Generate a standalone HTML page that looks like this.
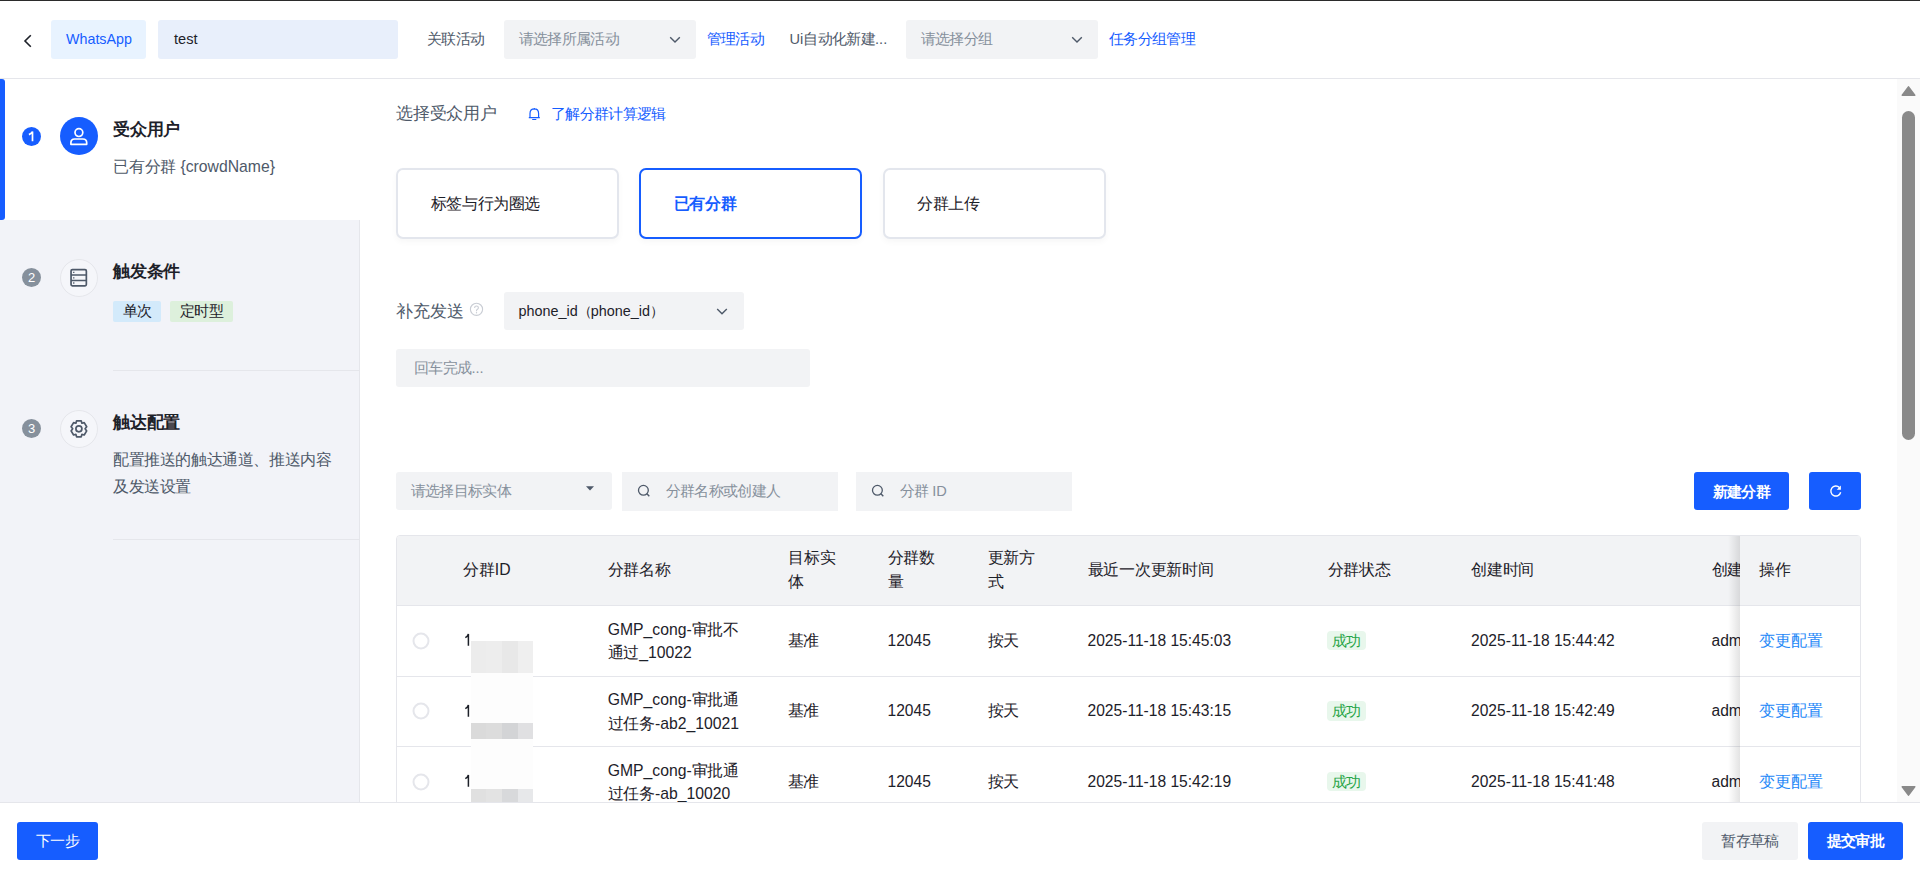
<!DOCTYPE html>
<html><head><meta charset="utf-8">
<style>
*{box-sizing:border-box;margin:0;padding:0}
html,body{width:1920px;height:878px;overflow:hidden;background:#fff;font-family:"Liberation Sans",sans-serif;color:#1d2129}
.a{position:absolute}
.t{position:absolute;white-space:nowrap}
.n{letter-spacing:0}
</style></head><body>

<div class="a" style="left:0px;top:0px;width:1920px;height:1px;background:#2b2b2b"></div>
<div class="a" style="left:0px;top:78px;width:1920px;height:1px;background:#e5e6eb"></div>
<svg class="a" style="left:20px;top:32px" width="16" height="18" viewBox="0 0 16 18"><path d="M10.8 3.2 L5 9 L10.8 14.8" fill="none" stroke="#1d2129" stroke-width="1.6"/></svg>
<div class="a" style="left:51px;top:20px;width:95px;height:39px;background:#e8f3ff;border-radius:3px"></div>
<div class="t" style="left:66px;top:29.00px;line-height:20px;font-size:14.3px;color:#165dff">WhatsApp</div>
<div class="a" style="left:158px;top:20px;width:240px;height:39px;background:#e8effb;border-radius:3px"></div>
<div class="t" style="left:174px;top:29.00px;line-height:20px;font-size:14.6px;color:#1d2129">test</div>
<div class="t" style="left:427px;top:29.00px;line-height:20px;font-size:14.6px;letter-spacing:-0.65px;color:#4e5969">关联活动</div>
<div class="a" style="left:504px;top:20px;width:192px;height:39px;background:#f2f3f5;border-radius:3px"></div>
<div class="t" style="left:518.5px;top:29.00px;line-height:20px;font-size:14.6px;letter-spacing:-0.65px;color:#86909c">请选择所属活动</div>
<svg class="a" style="left:668px;top:35px" width="14" height="10" viewBox="0 0 14 10"><path d="M2.2 2.2 L7 7 L11.8 2.2" fill="none" stroke="#4e5969" stroke-width="1.4"/></svg>
<div class="t" style="left:706.5px;top:29.00px;line-height:20px;font-size:14.6px;letter-spacing:-0.65px;color:#165dff">管理活动</div>
<div class="t" style="left:789.5px;top:29.00px;line-height:20px;font-size:14.6px;letter-spacing:-0.65px;color:#4e5969"><span class="n">Ui</span>自动化新建<span class="n">...</span></div>
<div class="a" style="left:906px;top:20px;width:192px;height:39px;background:#f2f3f5;border-radius:3px"></div>
<div class="t" style="left:920.5px;top:29.00px;line-height:20px;font-size:14.6px;letter-spacing:-0.65px;color:#86909c">请选择分组</div>
<svg class="a" style="left:1070px;top:35px" width="14" height="10" viewBox="0 0 14 10"><path d="M2.2 2.2 L7 7 L11.8 2.2" fill="none" stroke="#4e5969" stroke-width="1.4"/></svg>
<div class="t" style="left:1109px;top:29.00px;line-height:20px;font-size:14.6px;letter-spacing:-0.65px;color:#165dff">任务分组管理</div>
<div class="a" style="left:0px;top:79px;width:359px;height:723px;background:#f2f3f8"></div>
<div class="a" style="left:359px;top:79px;width:1px;height:723px;background:#e5e6eb"></div>
<div class="a" style="left:0px;top:79px;width:360px;height:141px;background:#fff"></div>
<div class="a" style="left:0px;top:79px;width:5px;height:141px;background:#165dff;border-radius:0 3px 3px 0"></div>
<svg class="a" style="left:22px;top:126.5px" width="19" height="19" viewBox="0 0 19 19"><circle cx="9.5" cy="9.5" r="9.5" fill="#165dff"/><path d="M6.9 7.6 Q9.4 6.6 10.5 4.6 V14.3" fill="none" stroke="#fff" stroke-width="1.7"/></svg>
<svg class="a" style="left:60px;top:117px" width="38" height="38" viewBox="0 0 38 38"><circle cx="19" cy="19" r="19" fill="#165dff"/><circle cx="18.9" cy="15.6" r="3.9" fill="none" stroke="#fff" stroke-width="1.7"/><path d="M10.9 27.3 V25.8 Q10.9 22 14.7 22 H22.9 Q26.7 22 26.7 25.8 V27.3 Z" fill="none" stroke="#fff" stroke-width="1.7" stroke-linejoin="round"/></svg>
<div class="t" style="left:113px;top:118.10px;line-height:24px;font-size:16.8px;letter-spacing:-0.2px;font-weight:bold;color:#1d2129">受众用户</div>
<div class="t" style="left:113px;top:155.70px;line-height:22px;font-size:15.75px;letter-spacing:-0.25px;color:#4e5969">已有分群<span class="n"> {crowdName}</span></div>
<div class="a" style="left:22px;top:267.8px;width:19px;height:19px;border-radius:50%;background:#86909c;color:#fff;font-size:13px;line-height:19px;text-align:center">2</div>
<svg class="a" style="left:60px;top:259px" width="38" height="38" viewBox="0 0 38 38"><circle cx="19" cy="19" r="18.5" fill="#f5f6fa" stroke="#e5e6eb" stroke-width="1"/><rect x="11.05" y="10.6" width="15.3" height="16.3" rx="1.3" fill="none" stroke="#4e5969" stroke-width="1.7"/><path d="M11 16.1 H26.4 M11 21.4 H26.4" stroke="#4e5969" stroke-width="1.5"/><path d="M13.1 13.4 h1.3 M13.1 18.8 h1.3 M13.1 24 h1.3" stroke="#4e5969" stroke-width="1.3"/></svg>
<div class="t" style="left:113px;top:259.70px;line-height:24px;font-size:16.8px;letter-spacing:-0.2px;font-weight:bold;color:#1d2129">触发条件</div>
<div class="a" style="left:113px;top:301px;width:48px;height:21px;background:#d3eafb;border-radius:2px"></div>
<div class="t" style="left:113px;top:300.80px;line-height:21px;font-size:14.6px;letter-spacing:-0.65px;color:#1d2129;width:48px;text-align:center">单次</div>
<div class="a" style="left:170px;top:301px;width:63px;height:21px;background:#ddf0dc;border-radius:2px"></div>
<div class="t" style="left:170px;top:300.80px;line-height:21px;font-size:14.6px;letter-spacing:-0.65px;color:#1d2129;width:63px;text-align:center">定时型</div>
<div class="a" style="left:113px;top:370px;width:246px;height:1px;background:#e5e6eb"></div>
<div class="a" style="left:22px;top:418.9px;width:19px;height:19px;border-radius:50%;background:#86909c;color:#fff;font-size:13px;line-height:19px;text-align:center">3</div>
<svg class="a" style="left:60px;top:410px" width="38" height="38" viewBox="0 0 38 38"><circle cx="19" cy="19" r="18.5" fill="#f5f6fa" stroke="#e5e6eb" stroke-width="1"/><path d="M16.6 10.8 H21.2 L21.9 13.2 L24.2 12.6 L26.7 16.7 L25.1 18.8 L26.7 20.9 L24.2 25.0 L21.9 24.4 L21.2 26.8 H16.6 L15.9 24.4 L13.6 25.0 L11.1 20.9 L12.7 18.8 L11.1 16.7 L13.6 12.6 L15.9 13.2 Z" fill="none" stroke="#4e5969" stroke-width="1.7" stroke-linejoin="round"/><circle cx="18.9" cy="18.8" r="3" fill="none" stroke="#4e5969" stroke-width="1.7"/></svg>
<div class="t" style="left:113px;top:410.50px;line-height:24px;font-size:16.8px;letter-spacing:-0.2px;font-weight:bold;color:#1d2129">触达配置</div>
<div class="t" style="left:113px;top:445.95px;line-height:27.4px;font-size:15.75px;letter-spacing:-0.4px;color:#4e5969">配置推送的触达通道、推送内容<br>及发送设置</div>
<div class="a" style="left:113px;top:539px;width:246px;height:1px;background:#e5e6eb"></div>
<div class="t" style="left:396px;top:102.20px;line-height:24px;font-size:16.8px;letter-spacing:-0.2px;color:#4e5969">选择受众用户</div>
<svg class="a" style="left:526px;top:105px" width="16" height="18" viewBox="0 0 16 18"><path d="M4 12.6 V8.4 Q4 4 8.3 3.9 Q12.6 4 12.6 8.4 V12.6 M8.3 2.9 V3.9" fill="none" stroke="#165dff" stroke-width="1.2"/><path d="M2.8 12.6 H13.8 M6.2 14.5 H10.3" stroke="#165dff" stroke-width="1.2"/></svg>
<div class="t" style="left:551px;top:103.85px;line-height:20px;font-size:14.6px;letter-spacing:-0.65px;color:#165dff">了解分群计算逻辑</div>
<div class="a" style="left:396px;top:168px;width:223px;height:71px;border:2px solid #e3e6ed;border-radius:7px;background:#fff;box-shadow:0 3px 6px rgba(0,0,0,0.035)"></div>
<div class="t" style="left:430.8px;top:192.50px;line-height:22px;font-size:15.75px;letter-spacing:-0.4px;color:#1d2129">标签与行为圈选</div>
<div class="a" style="left:639px;top:168px;width:223px;height:71px;border:2px solid #165dff;border-radius:7px;background:#fff;box-shadow:0 3px 6px rgba(0,0,0,0.035)"></div>
<div class="t" style="left:673.8px;top:192.50px;line-height:22px;font-size:15.75px;letter-spacing:-0.4px;color:#165dff;font-weight:bold">已有分群</div>
<div class="a" style="left:882.5px;top:168px;width:223px;height:71px;border:2px solid #e3e6ed;border-radius:7px;background:#fff;box-shadow:0 3px 6px rgba(0,0,0,0.035)"></div>
<div class="t" style="left:917.3px;top:192.50px;line-height:22px;font-size:15.75px;letter-spacing:-0.4px;color:#1d2129">分群上传</div>
<div class="t" style="left:396px;top:298.50px;line-height:24px;font-size:17.2px;letter-spacing:-0.05px;color:#4e5969">补充发送</div>
<svg class="a" style="left:468px;top:301px" width="17" height="17" viewBox="0 0 17 17"><circle cx="8.5" cy="8.3" r="6.1" fill="none" stroke="#c9cdd4" stroke-width="1.1"/><path d="M6.6 6.9 Q6.6 5 8.5 5 Q10.4 5 10.4 6.8 Q10.4 7.9 9.2 8.5 Q8.5 8.9 8.5 9.9 V10.3" fill="none" stroke="#c9cdd4" stroke-width="1.1"/><circle cx="8.5" cy="11.8" r="0.7" fill="#c9cdd4"/></svg>
<div class="a" style="left:504px;top:292px;width:240px;height:37.5px;background:#f2f3f5;border-radius:3px"></div>
<div class="t" style="left:518.5px;top:301.00px;line-height:20px;font-size:14.4px;color:#1d2129">phone_id<span style="letter-spacing:-0.9px">（</span>phone_id<span style="letter-spacing:-0.9px">）</span></div>
<svg class="a" style="left:715px;top:305px" width="14" height="12" viewBox="0 0 14 12"><path d="M2.2 4 L7 8.8 L11.8 4" fill="none" stroke="#4e5969" stroke-width="1.4"/></svg>
<div class="a" style="left:396px;top:349px;width:414px;height:38px;background:#f2f3f5;border-radius:3px"></div>
<div class="t" style="left:414px;top:358.25px;line-height:20px;font-size:14.6px;letter-spacing:-0.65px;color:#86909c">回车完成<span class="n">...</span></div>
<div class="a" style="left:396px;top:472px;width:216px;height:38px;background:#f2f3f5;border-radius:3px"></div>
<div class="t" style="left:410.5px;top:480.75px;line-height:20px;font-size:14.6px;letter-spacing:-0.65px;color:#86909c">请选择目标实体</div>
<svg class="a" style="left:584px;top:484px" width="12" height="9" viewBox="0 0 12 9"><path d="M2 2.2 H10 L6 6.6 Z" fill="#4e5969"/></svg>
<div class="a" style="left:622px;top:472px;width:216px;height:38.5px;background:#f2f3f5"></div>
<svg class="a" style="left:636px;top:483px" width="16" height="16" viewBox="0 0 16 16"><circle cx="7.4" cy="7.3" r="4.9" fill="none" stroke="#4e5969" stroke-width="1.3"/><path d="M10.9 10.8 L13.3 13.2" stroke="#4e5969" stroke-width="1.4"/></svg>
<div class="t" style="left:665.5px;top:480.75px;line-height:20px;font-size:14.6px;letter-spacing:-0.65px;color:#86909c">分群名称或创建人</div>
<div class="a" style="left:856px;top:472px;width:216px;height:38.5px;background:#f2f3f5"></div>
<svg class="a" style="left:870px;top:483px" width="16" height="16" viewBox="0 0 16 16"><circle cx="7.4" cy="7.3" r="4.9" fill="none" stroke="#4e5969" stroke-width="1.3"/><path d="M10.9 10.8 L13.3 13.2" stroke="#4e5969" stroke-width="1.4"/></svg>
<div class="t" style="left:899.5px;top:480.75px;line-height:20px;font-size:14.6px;letter-spacing:-0.65px;color:#86909c">分群<span class="n"> ID</span></div>
<div class="a" style="left:1694px;top:472px;width:95px;height:38px;background:#165dff;border-radius:3px"></div>
<div class="t" style="left:1694px;top:481.50px;line-height:20px;font-size:14.6px;letter-spacing:-0.65px;color:#fff;font-weight:bold;width:95px;text-align:center">新建分群</div>
<div class="a" style="left:1809px;top:472px;width:52px;height:38px;background:#165dff;border-radius:3px"></div>
<svg class="a" style="left:1827.5px;top:483px" width="16" height="16" viewBox="0 0 16 16"><path d="M12.7 9.3 A5 5 0 1 1 11.4 4.5" fill="none" stroke="#fff" stroke-width="1.4"/><path d="M8.7 6.7 H12.9 V2.6 Z" fill="#fff"/></svg>
<div class="a" style="left:396px;top:535px;width:1465px;height:300px;border:1px solid #e5e6eb;border-radius:4px 4px 0 0;background:#fff"></div>
<div class="a" style="left:397px;top:536px;width:1463px;height:69px;background:#f2f3f5;border-radius:3px 3px 0 0"></div>
<div class="a" style="left:397px;top:605px;width:1463px;height:1px;background:#e5e6eb"></div>
<div class="a" style="left:397px;top:676px;width:1463px;height:1px;background:#e5e6eb"></div>
<div class="a" style="left:397px;top:746px;width:1463px;height:1px;background:#e5e6eb"></div>
<div class="a" style="left:397px;top:817px;width:1463px;height:1px;background:#e5e6eb"></div>
<div class="t" style="left:463.3px;top:557.75px;line-height:24px;font-size:15.75px;letter-spacing:-0.25px;color:#1d2129">分群<span class="n">ID</span></div>
<div class="t" style="left:607.7px;top:557.75px;line-height:24px;font-size:15.75px;letter-spacing:-0.25px;color:#1d2129">分群名称</div>
<div class="t" style="left:788.2px;top:546.10px;line-height:23.5px;font-size:15.75px;letter-spacing:-0.25px;color:#1d2129">目标实<br>体</div>
<div class="t" style="left:887.5px;top:546.10px;line-height:23.5px;font-size:15.75px;letter-spacing:-0.25px;color:#1d2129">分群数<br>量</div>
<div class="t" style="left:987.5px;top:546.10px;line-height:23.5px;font-size:15.75px;letter-spacing:-0.25px;color:#1d2129">更新方<br>式</div>
<div class="t" style="left:1087.5px;top:557.75px;line-height:24px;font-size:15.75px;letter-spacing:-0.25px;color:#1d2129">最近一次更新时间</div>
<div class="t" style="left:1327.5px;top:557.75px;line-height:24px;font-size:15.75px;letter-spacing:-0.25px;color:#1d2129">分群状态</div>
<div class="t" style="left:1471px;top:557.75px;line-height:24px;font-size:15.75px;letter-spacing:-0.25px;color:#1d2129">创建时间</div>
<div class="t" style="left:1711.5px;top:557.75px;line-height:24px;font-size:15.75px;letter-spacing:-0.25px;color:#1d2129">创建人</div>
<svg class="a" style="left:411.6px;top:631.5px" width="18" height="18" viewBox="0 0 18 18"><circle cx="9" cy="9" r="7.5" fill="#fff" stroke="#e5e6eb" stroke-width="2"/></svg>
<svg class="a" style="left:463px;top:632.0px" width="10" height="16" viewBox="0 0 10 16"><path d="M2.3 5.6 Q4.6 4.6 5.4 2 V13.8" fill="none" stroke="#1d2129" stroke-width="1.5"/></svg>
<div class="t" style="left:607.7px;top:617.50px;line-height:23.8px;font-size:15.75px;color:#1d2129">GMP_cong-<span style="letter-spacing:-0.25px">审批不</span><br><span style="letter-spacing:-0.25px">通过</span>_10022</div>
<div class="t" style="left:787.5px;top:629.50px;line-height:22px;font-size:15.75px;letter-spacing:-0.25px;color:#1d2129">基准</div>
<div class="t" style="left:887.5px;top:629.50px;line-height:22px;font-size:15.6px;color:#1d2129">12045</div>
<div class="t" style="left:987.5px;top:629.50px;line-height:22px;font-size:15.75px;letter-spacing:-0.25px;color:#1d2129">按天</div>
<div class="t" style="left:1087.5px;top:629.50px;line-height:22px;font-size:15.6px;color:#1d2129">2025-11-18 15:45:03</div>
<div class="a" style="left:1327px;top:630.8px;width:39px;height:19.6px;background:#e8f7ec;border-radius:4px"></div>
<div class="t" style="left:1327px;top:630.80px;line-height:20px;font-size:14.6px;letter-spacing:-0.65px;color:#27a547;width:39px;text-align:center">成功</div>
<div class="t" style="left:1471px;top:629.50px;line-height:22px;font-size:15.6px;color:#1d2129">2025-11-18 15:44:42</div>
<div class="t" style="left:1711.5px;top:629.50px;line-height:22px;font-size:15.6px;color:#1d2129">admin</div>
<svg class="a" style="left:411.6px;top:702.0px" width="18" height="18" viewBox="0 0 18 18"><circle cx="9" cy="9" r="7.5" fill="#fff" stroke="#e5e6eb" stroke-width="2"/></svg>
<svg class="a" style="left:463px;top:702.5px" width="10" height="16" viewBox="0 0 10 16"><path d="M2.3 5.6 Q4.6 4.6 5.4 2 V13.8" fill="none" stroke="#1d2129" stroke-width="1.5"/></svg>
<div class="t" style="left:607.7px;top:688.00px;line-height:23.8px;font-size:15.75px;color:#1d2129">GMP_cong-<span style="letter-spacing:-0.25px">审批通</span><br><span style="letter-spacing:-0.25px">过任务</span>-ab2_10021</div>
<div class="t" style="left:787.5px;top:700.00px;line-height:22px;font-size:15.75px;letter-spacing:-0.25px;color:#1d2129">基准</div>
<div class="t" style="left:887.5px;top:700.00px;line-height:22px;font-size:15.6px;color:#1d2129">12045</div>
<div class="t" style="left:987.5px;top:700.00px;line-height:22px;font-size:15.75px;letter-spacing:-0.25px;color:#1d2129">按天</div>
<div class="t" style="left:1087.5px;top:700.00px;line-height:22px;font-size:15.6px;color:#1d2129">2025-11-18 15:43:15</div>
<div class="a" style="left:1327px;top:701.3px;width:39px;height:19.6px;background:#e8f7ec;border-radius:4px"></div>
<div class="t" style="left:1327px;top:701.30px;line-height:20px;font-size:14.6px;letter-spacing:-0.65px;color:#27a547;width:39px;text-align:center">成功</div>
<div class="t" style="left:1471px;top:700.00px;line-height:22px;font-size:15.6px;color:#1d2129">2025-11-18 15:42:49</div>
<div class="t" style="left:1711.5px;top:700.00px;line-height:22px;font-size:15.6px;color:#1d2129">admin</div>
<svg class="a" style="left:411.6px;top:772.5px" width="18" height="18" viewBox="0 0 18 18"><circle cx="9" cy="9" r="7.5" fill="#fff" stroke="#e5e6eb" stroke-width="2"/></svg>
<svg class="a" style="left:463px;top:773.0px" width="10" height="16" viewBox="0 0 10 16"><path d="M2.3 5.6 Q4.6 4.6 5.4 2 V13.8" fill="none" stroke="#1d2129" stroke-width="1.5"/></svg>
<div class="t" style="left:607.7px;top:758.50px;line-height:23.8px;font-size:15.75px;color:#1d2129">GMP_cong-<span style="letter-spacing:-0.25px">审批通</span><br><span style="letter-spacing:-0.25px">过任务</span>-ab_10020</div>
<div class="t" style="left:787.5px;top:770.50px;line-height:22px;font-size:15.75px;letter-spacing:-0.25px;color:#1d2129">基准</div>
<div class="t" style="left:887.5px;top:770.50px;line-height:22px;font-size:15.6px;color:#1d2129">12045</div>
<div class="t" style="left:987.5px;top:770.50px;line-height:22px;font-size:15.75px;letter-spacing:-0.25px;color:#1d2129">按天</div>
<div class="t" style="left:1087.5px;top:770.50px;line-height:22px;font-size:15.6px;color:#1d2129">2025-11-18 15:42:19</div>
<div class="a" style="left:1327px;top:771.8px;width:39px;height:19.6px;background:#e8f7ec;border-radius:4px"></div>
<div class="t" style="left:1327px;top:771.80px;line-height:20px;font-size:14.6px;letter-spacing:-0.65px;color:#27a547;width:39px;text-align:center">成功</div>
<div class="t" style="left:1471px;top:770.50px;line-height:22px;font-size:15.6px;color:#1d2129">2025-11-18 15:41:48</div>
<div class="t" style="left:1711.5px;top:770.50px;line-height:22px;font-size:15.6px;color:#1d2129">admin</div>
<div class="a" style="left:471px;top:640.5px;width:15px;height:32.89999999999998px;background:#ececec"></div>
<div class="a" style="left:486px;top:640.5px;width:16px;height:32.89999999999998px;background:#ededed"></div>
<div class="a" style="left:502px;top:640.5px;width:16px;height:32.89999999999998px;background:#e8e8e8"></div>
<div class="a" style="left:518px;top:640.5px;width:15px;height:32.89999999999998px;background:#efefef"></div>
<div class="a" style="left:471px;top:673.4px;width:15px;height:49.60000000000002px;background:#fdfdfd"></div>
<div class="a" style="left:486px;top:673.4px;width:16px;height:49.60000000000002px;background:#fdfdfd"></div>
<div class="a" style="left:502px;top:673.4px;width:16px;height:49.60000000000002px;background:#fdfdfd"></div>
<div class="a" style="left:518px;top:673.4px;width:15px;height:49.60000000000002px;background:#fdfdfd"></div>
<div class="a" style="left:471px;top:723px;width:15px;height:16.299999999999955px;background:#dadada"></div>
<div class="a" style="left:486px;top:723px;width:16px;height:16.299999999999955px;background:#dcdcdc"></div>
<div class="a" style="left:502px;top:723px;width:16px;height:16.299999999999955px;background:#d3d4d6"></div>
<div class="a" style="left:518px;top:723px;width:15px;height:16.299999999999955px;background:#e0e0e2"></div>
<div class="a" style="left:471px;top:739.3px;width:15px;height:49.40000000000009px;background:#fdfdfd"></div>
<div class="a" style="left:486px;top:739.3px;width:16px;height:49.40000000000009px;background:#fdfdfd"></div>
<div class="a" style="left:502px;top:739.3px;width:16px;height:49.40000000000009px;background:#fdfdfd"></div>
<div class="a" style="left:518px;top:739.3px;width:15px;height:49.40000000000009px;background:#fdfdfd"></div>
<div class="a" style="left:471px;top:788.7px;width:15px;height:13.299999999999955px;background:#e0e0e0"></div>
<div class="a" style="left:486px;top:788.7px;width:16px;height:13.299999999999955px;background:#e3e3e3"></div>
<div class="a" style="left:502px;top:788.7px;width:16px;height:13.299999999999955px;background:#d8d9db"></div>
<div class="a" style="left:518px;top:788.7px;width:15px;height:13.299999999999955px;background:#e7e8ea"></div>
<div class="a" style="left:1740px;top:536px;width:120px;height:69px;background:#f2f3f5"></div>
<div class="a" style="left:1740px;top:606px;width:120px;height:210px;background:#fff"></div>
<div class="a" style="left:1740px;top:676px;width:120px;height:1px;background:#e5e6eb"></div>
<div class="a" style="left:1740px;top:746px;width:120px;height:1px;background:#e5e6eb"></div>
<div class="a" style="left:1728px;top:536px;width:12px;height:280px;background:linear-gradient(to right, rgba(0,0,0,0), rgba(0,0,0,0.11))"></div>
<div class="t" style="left:1759.2px;top:557.75px;line-height:24px;font-size:15.75px;letter-spacing:-0.25px;color:#1d2129">操作</div>
<div class="t" style="left:1759px;top:629.50px;line-height:22px;font-size:16px;letter-spacing:0;color:#1e88f7">变更配置</div>
<div class="t" style="left:1759px;top:700.00px;line-height:22px;font-size:16px;letter-spacing:0;color:#1e88f7">变更配置</div>
<div class="t" style="left:1759px;top:770.50px;line-height:22px;font-size:16px;letter-spacing:0;color:#1e88f7">变更配置</div>
<div class="a" style="left:1897px;top:79px;width:23px;height:723px;background:#fafafa"></div>
<svg class="a" style="left:1900px;top:84px" width="17" height="14" viewBox="0 0 17 14"><path d="M8.5 2.9 L14.7 11.3 H2.3 Z" fill="#898989" stroke="#898989" stroke-width="1.6" stroke-linejoin="round"/></svg>
<div class="a" style="left:1902px;top:111px;width:13px;height:329px;background:#898989;border-radius:6.5px"></div>
<svg class="a" style="left:1900px;top:784px" width="17" height="14" viewBox="0 0 17 14"><path d="M8.5 11.1 L14.7 2.7 H2.3 Z" fill="#898989" stroke="#898989" stroke-width="1.6" stroke-linejoin="round"/></svg>
<div class="a" style="left:0px;top:802px;width:1920px;height:76px;background:#fff;border-top:1px solid #e5e6eb"></div>
<div class="a" style="left:17px;top:822px;width:81px;height:38px;background:#165dff;border-radius:3px"></div>
<div class="t" style="left:17px;top:831.00px;line-height:20px;font-size:14.6px;letter-spacing:-0.65px;color:#fff;width:81px;text-align:center">下一步</div>
<div class="a" style="left:1702px;top:822px;width:96px;height:38px;background:#f2f3f5;border-radius:3px"></div>
<div class="t" style="left:1702px;top:831.00px;line-height:20px;font-size:14.6px;letter-spacing:-0.65px;color:#4e5969;width:96px;text-align:center">暂存草稿</div>
<div class="a" style="left:1808px;top:822px;width:95px;height:38px;background:#165dff;border-radius:3px"></div>
<div class="t" style="left:1808px;top:831.00px;line-height:20px;font-size:14.6px;letter-spacing:-0.65px;color:#fff;font-weight:bold;width:95px;text-align:center">提交审批</div>
</body></html>
